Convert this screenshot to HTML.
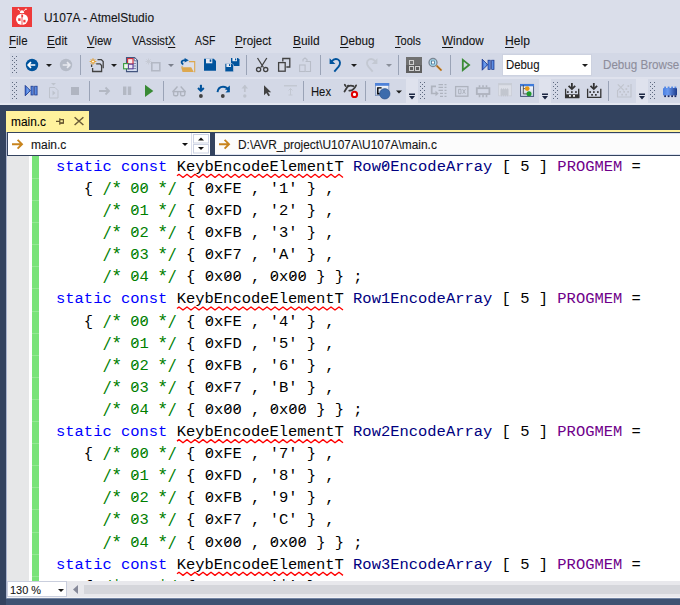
<!DOCTYPE html>
<html><head><meta charset="utf-8"><style>
html,body{margin:0;padding:0;width:680px;height:605px;overflow:hidden;background:#DADEEA;}
.z{position:relative}.ast{display:inline-block;transform:translateY(0.6px) scale(1.18)}.sl{display:inline-block;transform:translateY(1.1px) scaleY(1.2)}.z::after{content:'';position:absolute;left:1.35px;top:7.3px;width:6.2px;height:1.05px;background:currentColor;transform:rotate(-39deg)}
</style></head><body>
<div style="position:absolute;left:0px;top:0px;width:680px;height:105px;background:#DADEEA;"></div>
<div style="position:absolute;left:10px;top:53px;width:670px;height:24px;background:#D3D8E6;"></div>
<div style="position:absolute;left:10px;top:79px;width:396px;height:24px;background:#D3D8E6;"></div>
<div style="position:absolute;left:406px;top:79px;width:12px;height:24px;background:#DFE2ED;"></div>
<div style="position:absolute;left:418px;top:79px;width:121px;height:24px;background:#D3D8E6;"></div>
<div style="position:absolute;left:539px;top:79px;width:12px;height:24px;background:#DFE2ED;"></div>
<div style="position:absolute;left:551px;top:79px;width:85px;height:24px;background:#D3D8E6;"></div>
<div style="position:absolute;left:636px;top:79px;width:12px;height:24px;background:#DFE2ED;"></div>
<div style="position:absolute;left:648px;top:79px;width:32px;height:24px;background:#D3D8E6;"></div>
<div style="position:absolute;left:10px;top:77px;width:670px;height:2px;background:#DFE2ED;"></div>
<div style="position:absolute;left:0px;top:103px;width:680px;height:2px;background:#E4E7F0;"></div>
<div style="position:absolute;left:0px;top:105px;width:680px;height:500px;background:#33435F;"></div>
<div style="position:absolute;left:6px;top:111px;width:83px;height:21px;background:#FFF29D;"></div>
<div style="position:absolute;left:6px;top:130px;width:674px;height:2px;background:#FFF29D;"></div>
<div style="position:absolute;left:6px;top:132px;width:674px;height:24px;background:#A9B3CC;"></div>
<div style="position:absolute;left:7px;top:132px;width:673px;height:24px;background:#33435F;"></div>
<div style="position:absolute;left:8px;top:133px;width:183px;height:22px;background:#FFFFFF;"></div>
<div style="position:absolute;left:191px;top:133px;width:1px;height:22px;background:#D9DDEA;"></div>
<div style="position:absolute;left:192px;top:133px;width:18px;height:22px;background:#FFFFFF;"></div>
<div style="position:absolute;left:210px;top:133px;width:5px;height:22px;background:#33435F;"></div>
<div style="position:absolute;left:215px;top:133px;width:465px;height:22px;background:#FCFCFC;"></div>
<div style="position:absolute;left:215px;top:133px;width:465px;height:1px;background:#DDE2F0;"></div>
<div style="position:absolute;left:215px;top:154px;width:465px;height:1px;background:#DDE2F0;"></div>
<div style="position:absolute;left:6px;top:156px;width:1px;height:442px;background:#A9B3CC;"></div>
<div style="position:absolute;left:7px;top:156px;width:673px;height:425px;background:#FFFFFF;"></div>
<div style="position:absolute;left:7px;top:156px;width:22px;height:425px;background:#E6E7E8;"></div>
<div style="position:absolute;left:32px;top:156px;width:7px;height:425px;background:#79E379;"></div>
<div style="position:absolute;left:32px;top:178px;width:7px;height:1px;background:#94E894;"></div>
<div style="position:absolute;left:32px;top:200px;width:7px;height:1px;background:#94E894;"></div>
<div style="position:absolute;left:32px;top:222px;width:7px;height:1px;background:#94E894;"></div>
<div style="position:absolute;left:32px;top:244px;width:7px;height:1px;background:#94E894;"></div>
<div style="position:absolute;left:32px;top:266px;width:7px;height:1px;background:#94E894;"></div>
<div style="position:absolute;left:32px;top:288px;width:7px;height:1px;background:#94E894;"></div>
<div style="position:absolute;left:32px;top:311px;width:7px;height:1px;background:#94E894;"></div>
<div style="position:absolute;left:32px;top:333px;width:7px;height:1px;background:#94E894;"></div>
<div style="position:absolute;left:32px;top:355px;width:7px;height:1px;background:#94E894;"></div>
<div style="position:absolute;left:32px;top:377px;width:7px;height:1px;background:#94E894;"></div>
<div style="position:absolute;left:32px;top:399px;width:7px;height:1px;background:#94E894;"></div>
<div style="position:absolute;left:32px;top:421px;width:7px;height:1px;background:#94E894;"></div>
<div style="position:absolute;left:32px;top:443px;width:7px;height:1px;background:#94E894;"></div>
<div style="position:absolute;left:32px;top:465px;width:7px;height:1px;background:#94E894;"></div>
<div style="position:absolute;left:32px;top:487px;width:7px;height:1px;background:#94E894;"></div>
<div style="position:absolute;left:32px;top:509px;width:7px;height:1px;background:#94E894;"></div>
<div style="position:absolute;left:32px;top:532px;width:7px;height:1px;background:#94E894;"></div>
<div style="position:absolute;left:32px;top:554px;width:7px;height:1px;background:#94E894;"></div>
<div style="position:absolute;left:32px;top:576px;width:7px;height:1px;background:#94E894;"></div>
<div style="position:absolute;left:7px;top:581px;width:673px;height:17px;background:#E8E8EC;"></div>
<div style="position:absolute;left:7px;top:581px;width:60px;height:16px;background:#FFFFFF;box-sizing:border-box;border:1px solid #C9CEDD;"></div>
<div style="position:absolute;left:84px;top:585px;width:596px;height:9px;background:#D5D6DB;"></div>
<div style="position:absolute;left:7px;top:597px;width:673px;height:1px;background:#F2F2F5;"></div>
<div style="position:absolute;left:6px;top:598px;width:674px;height:1px;background:#7384A3;"></div>
<div style="position:absolute;left:6px;top:599px;width:674px;height:6px;background:#3E5272;"></div>
<div style="position:absolute;left:44px;top:10.69px;font-family:'Liberation Sans', sans-serif;font-size:12.5px;line-height:normal;white-space:pre;color:#141414;-webkit-text-stroke:0.1px #141414;transform:scaleX(0.954);transform-origin:0 0;">U107A - AtmelStudio</div>
<div style="position:absolute;left:9.3px;top:33.69px;font-family:'Liberation Sans', sans-serif;font-size:12.5px;line-height:normal;white-space:pre;color:#141414;-webkit-text-stroke:0.1px #141414;transform:scaleX(0.921);transform-origin:0 0;"><u style="text-decoration-thickness:1px;text-underline-offset:1.5px">F</u>ile</div>
<div style="position:absolute;left:47.2px;top:33.69px;font-family:'Liberation Sans', sans-serif;font-size:12.5px;line-height:normal;white-space:pre;color:#141414;-webkit-text-stroke:0.1px #141414;transform:scaleX(0.943);transform-origin:0 0;"><u style="text-decoration-thickness:1px;text-underline-offset:1.5px">E</u>dit</div>
<div style="position:absolute;left:87px;top:33.69px;font-family:'Liberation Sans', sans-serif;font-size:12.5px;line-height:normal;white-space:pre;color:#141414;-webkit-text-stroke:0.1px #141414;transform:scaleX(0.915);transform-origin:0 0;"><u style="text-decoration-thickness:1px;text-underline-offset:1.5px">V</u>iew</div>
<div style="position:absolute;left:132px;top:33.69px;font-family:'Liberation Sans', sans-serif;font-size:12.5px;line-height:normal;white-space:pre;color:#141414;-webkit-text-stroke:0.1px #141414;transform:scaleX(0.882);transform-origin:0 0;">VAssist<u style="text-decoration-thickness:1px;text-underline-offset:1.5px">X</u></div>
<div style="position:absolute;left:195px;top:33.69px;font-family:'Liberation Sans', sans-serif;font-size:12.5px;line-height:normal;white-space:pre;color:#141414;-webkit-text-stroke:0.1px #141414;transform:scaleX(0.833);transform-origin:0 0;">ASF</div>
<div style="position:absolute;left:235.3px;top:33.69px;font-family:'Liberation Sans', sans-serif;font-size:12.5px;line-height:normal;white-space:pre;color:#141414;-webkit-text-stroke:0.1px #141414;transform:scaleX(0.933);transform-origin:0 0;"><u style="text-decoration-thickness:1px;text-underline-offset:1.5px">P</u>roject</div>
<div style="position:absolute;left:292.5px;top:33.69px;font-family:'Liberation Sans', sans-serif;font-size:12.5px;line-height:normal;white-space:pre;color:#141414;-webkit-text-stroke:0.1px #141414;transform:scaleX(0.956);transform-origin:0 0;"><u style="text-decoration-thickness:1px;text-underline-offset:1.5px">B</u>uild</div>
<div style="position:absolute;left:339.6px;top:33.69px;font-family:'Liberation Sans', sans-serif;font-size:12.5px;line-height:normal;white-space:pre;color:#141414;-webkit-text-stroke:0.1px #141414;transform:scaleX(0.936);transform-origin:0 0;"><u style="text-decoration-thickness:1px;text-underline-offset:1.5px">D</u>ebug</div>
<div style="position:absolute;left:394.5px;top:33.69px;font-family:'Liberation Sans', sans-serif;font-size:12.5px;line-height:normal;white-space:pre;color:#141414;-webkit-text-stroke:0.1px #141414;transform:scaleX(0.883);transform-origin:0 0;"><u style="text-decoration-thickness:1px;text-underline-offset:1.5px">T</u>ools</div>
<div style="position:absolute;left:441.5px;top:33.69px;font-family:'Liberation Sans', sans-serif;font-size:12.5px;line-height:normal;white-space:pre;color:#141414;-webkit-text-stroke:0.1px #141414;transform:scaleX(0.937);transform-origin:0 0;"><u style="text-decoration-thickness:1px;text-underline-offset:1.5px">W</u>indow</div>
<div style="position:absolute;left:505.4px;top:33.69px;font-family:'Liberation Sans', sans-serif;font-size:12.5px;line-height:normal;white-space:pre;color:#141414;-webkit-text-stroke:0.1px #141414;transform:scaleX(0.968);transform-origin:0 0;"><u style="text-decoration-thickness:1px;text-underline-offset:1.5px">H</u>elp</div>
<div style="position:absolute;left:502px;top:54px;width:90px;height:22px;background:#CDD2E0;"></div>
<div style="position:absolute;left:503px;top:55px;width:88px;height:20px;background:#FFFFFF;"></div>
<div style="position:absolute;left:506px;top:57.69px;font-family:'Liberation Sans', sans-serif;font-size:12.5px;line-height:normal;white-space:pre;color:#141414;-webkit-text-stroke:0.1px #141414;transform:scaleX(0.91);transform-origin:0 0;">Debug</div>
<div style="position:absolute;left:603px;top:57.69px;font-family:'Liberation Sans', sans-serif;font-size:12.5px;line-height:normal;white-space:pre;color:#8D8D9B;-webkit-text-stroke:0.1px #8D8D9B;transform:scaleX(0.93);transform-origin:0 0;">Debug Browse</div>
<div style="position:absolute;left:311px;top:84.69px;font-family:'Liberation Sans', sans-serif;font-size:12.5px;line-height:normal;white-space:pre;color:#141414;-webkit-text-stroke:0.1px #141414;transform:scaleX(0.9);transform-origin:0 0;">Hex</div>
<div style="position:absolute;left:10.5px;top:114.69px;font-family:'Liberation Sans', sans-serif;font-size:12.5px;line-height:normal;white-space:pre;color:#000000;-webkit-text-stroke:0.1px #000000;transform:scaleX(0.95);transform-origin:0 0;">main.c</div>
<div style="position:absolute;left:31px;top:137.69px;font-family:'Liberation Sans', sans-serif;font-size:12.5px;line-height:normal;white-space:pre;color:#141414;-webkit-text-stroke:0.1px #141414;transform:scaleX(0.96);transform-origin:0 0;">main.c</div>
<div style="position:absolute;left:238px;top:137.69px;font-family:'Liberation Sans', sans-serif;font-size:12.5px;line-height:normal;white-space:pre;color:#141414;-webkit-text-stroke:0.1px #141414;transform:scaleX(0.952);transform-origin:0 0;">D:\AVR_project\U107A\U107A\main.c</div>
<div style="position:absolute;left:10px;top:583.59px;font-family:'Liberation Sans', sans-serif;font-size:11.5px;line-height:normal;white-space:pre;color:#141414;-webkit-text-stroke:0.1px #141414;transform:scaleX(0.95);transform-origin:0 0;">130 %</div>
<div style="position:absolute;left:7px;top:156px;width:673px;height:425px;overflow:hidden">
<div style="position:absolute;left:49px;top:-0.27px;height:22.11px;line-height:22.11px;font-family:'Liberation Mono', monospace;font-size:15.48px;white-space:pre"><span style="color:#0000FF">static const </span><span style="color:#000000">KeybEncodeElementT</span><span style="color:#000"> </span><span style="color:#000080">Row<span class="z">0</span>EncodeArray</span><span style="color:#000000"> [ 5 ] </span><span style="color:#6F008A">PROGMEM</span><span style="color:#000000"> =</span></div>
<div style="position:absolute;left:49px;top:21.84px;height:22.11px;line-height:22.11px;font-family:'Liberation Mono', monospace;font-size:15.48px;white-space:pre"><span style="color:#000000">   { </span><span style="color:#008000"><span class="sl">/</span><span class="ast">*</span> <span class="z">0</span><span class="z">0</span> <span class="ast">*</span><span class="sl">/</span></span><span style="color:#000000"> { <span class="z">0</span>xFE , '1' } ,</span></div>
<div style="position:absolute;left:49px;top:43.95px;height:22.11px;line-height:22.11px;font-family:'Liberation Mono', monospace;font-size:15.48px;white-space:pre"><span style="color:#000000">     </span><span style="color:#008000"><span class="sl">/</span><span class="ast">*</span> <span class="z">0</span>1 <span class="ast">*</span><span class="sl">/</span></span><span style="color:#000000"> { <span class="z">0</span>xFD , '2' } ,</span></div>
<div style="position:absolute;left:49px;top:66.06px;height:22.11px;line-height:22.11px;font-family:'Liberation Mono', monospace;font-size:15.48px;white-space:pre"><span style="color:#000000">     </span><span style="color:#008000"><span class="sl">/</span><span class="ast">*</span> <span class="z">0</span>2 <span class="ast">*</span><span class="sl">/</span></span><span style="color:#000000"> { <span class="z">0</span>xFB , '3' } ,</span></div>
<div style="position:absolute;left:49px;top:88.17px;height:22.11px;line-height:22.11px;font-family:'Liberation Mono', monospace;font-size:15.48px;white-space:pre"><span style="color:#000000">     </span><span style="color:#008000"><span class="sl">/</span><span class="ast">*</span> <span class="z">0</span>3 <span class="ast">*</span><span class="sl">/</span></span><span style="color:#000000"> { <span class="z">0</span>xF7 , 'A' } ,</span></div>
<div style="position:absolute;left:49px;top:110.28px;height:22.11px;line-height:22.11px;font-family:'Liberation Mono', monospace;font-size:15.48px;white-space:pre"><span style="color:#000">     </span><span style="color:#008000"><span class="sl">/</span><span class="ast">*</span> <span class="z">0</span>4 <span class="ast">*</span><span class="sl">/</span></span><span style="color:#000000"> { <span class="z">0</span>x<span class="z">0</span><span class="z">0</span> , <span class="z">0</span>x<span class="z">0</span><span class="z">0</span> } } ;</span></div>
<div style="position:absolute;left:49px;top:132.39px;height:22.11px;line-height:22.11px;font-family:'Liberation Mono', monospace;font-size:15.48px;white-space:pre"><span style="color:#0000FF">static const </span><span style="color:#000000">KeybEncodeElementT</span><span style="color:#000"> </span><span style="color:#000080">Row1EncodeArray</span><span style="color:#000000"> [ 5 ] </span><span style="color:#6F008A">PROGMEM</span><span style="color:#000000"> =</span></div>
<div style="position:absolute;left:49px;top:154.50px;height:22.11px;line-height:22.11px;font-family:'Liberation Mono', monospace;font-size:15.48px;white-space:pre"><span style="color:#000000">   { </span><span style="color:#008000"><span class="sl">/</span><span class="ast">*</span> <span class="z">0</span><span class="z">0</span> <span class="ast">*</span><span class="sl">/</span></span><span style="color:#000000"> { <span class="z">0</span>xFE , '4' } ,</span></div>
<div style="position:absolute;left:49px;top:176.61px;height:22.11px;line-height:22.11px;font-family:'Liberation Mono', monospace;font-size:15.48px;white-space:pre"><span style="color:#000000">     </span><span style="color:#008000"><span class="sl">/</span><span class="ast">*</span> <span class="z">0</span>1 <span class="ast">*</span><span class="sl">/</span></span><span style="color:#000000"> { <span class="z">0</span>xFD , '5' } ,</span></div>
<div style="position:absolute;left:49px;top:198.72px;height:22.11px;line-height:22.11px;font-family:'Liberation Mono', monospace;font-size:15.48px;white-space:pre"><span style="color:#000000">     </span><span style="color:#008000"><span class="sl">/</span><span class="ast">*</span> <span class="z">0</span>2 <span class="ast">*</span><span class="sl">/</span></span><span style="color:#000000"> { <span class="z">0</span>xFB , '6' } ,</span></div>
<div style="position:absolute;left:49px;top:220.83px;height:22.11px;line-height:22.11px;font-family:'Liberation Mono', monospace;font-size:15.48px;white-space:pre"><span style="color:#000000">     </span><span style="color:#008000"><span class="sl">/</span><span class="ast">*</span> <span class="z">0</span>3 <span class="ast">*</span><span class="sl">/</span></span><span style="color:#000000"> { <span class="z">0</span>xF7 , 'B' } ,</span></div>
<div style="position:absolute;left:49px;top:242.94px;height:22.11px;line-height:22.11px;font-family:'Liberation Mono', monospace;font-size:15.48px;white-space:pre"><span style="color:#000">     </span><span style="color:#008000"><span class="sl">/</span><span class="ast">*</span> <span class="z">0</span>4 <span class="ast">*</span><span class="sl">/</span></span><span style="color:#000000"> { <span class="z">0</span>x<span class="z">0</span><span class="z">0</span> , <span class="z">0</span>x<span class="z">0</span><span class="z">0</span> } } ;</span></div>
<div style="position:absolute;left:49px;top:265.05px;height:22.11px;line-height:22.11px;font-family:'Liberation Mono', monospace;font-size:15.48px;white-space:pre"><span style="color:#0000FF">static const </span><span style="color:#000000">KeybEncodeElementT</span><span style="color:#000"> </span><span style="color:#000080">Row2EncodeArray</span><span style="color:#000000"> [ 5 ] </span><span style="color:#6F008A">PROGMEM</span><span style="color:#000000"> =</span></div>
<div style="position:absolute;left:49px;top:287.16px;height:22.11px;line-height:22.11px;font-family:'Liberation Mono', monospace;font-size:15.48px;white-space:pre"><span style="color:#000000">   { </span><span style="color:#008000"><span class="sl">/</span><span class="ast">*</span> <span class="z">0</span><span class="z">0</span> <span class="ast">*</span><span class="sl">/</span></span><span style="color:#000000"> { <span class="z">0</span>xFE , '7' } ,</span></div>
<div style="position:absolute;left:49px;top:309.27px;height:22.11px;line-height:22.11px;font-family:'Liberation Mono', monospace;font-size:15.48px;white-space:pre"><span style="color:#000000">     </span><span style="color:#008000"><span class="sl">/</span><span class="ast">*</span> <span class="z">0</span>1 <span class="ast">*</span><span class="sl">/</span></span><span style="color:#000000"> { <span class="z">0</span>xFD , '8' } ,</span></div>
<div style="position:absolute;left:49px;top:331.38px;height:22.11px;line-height:22.11px;font-family:'Liberation Mono', monospace;font-size:15.48px;white-space:pre"><span style="color:#000000">     </span><span style="color:#008000"><span class="sl">/</span><span class="ast">*</span> <span class="z">0</span>2 <span class="ast">*</span><span class="sl">/</span></span><span style="color:#000000"> { <span class="z">0</span>xFB , '9' } ,</span></div>
<div style="position:absolute;left:49px;top:353.49px;height:22.11px;line-height:22.11px;font-family:'Liberation Mono', monospace;font-size:15.48px;white-space:pre"><span style="color:#000000">     </span><span style="color:#008000"><span class="sl">/</span><span class="ast">*</span> <span class="z">0</span>3 <span class="ast">*</span><span class="sl">/</span></span><span style="color:#000000"> { <span class="z">0</span>xF7 , 'C' } ,</span></div>
<div style="position:absolute;left:49px;top:375.60px;height:22.11px;line-height:22.11px;font-family:'Liberation Mono', monospace;font-size:15.48px;white-space:pre"><span style="color:#000">     </span><span style="color:#008000"><span class="sl">/</span><span class="ast">*</span> <span class="z">0</span>4 <span class="ast">*</span><span class="sl">/</span></span><span style="color:#000000"> { <span class="z">0</span>x<span class="z">0</span><span class="z">0</span> , <span class="z">0</span>x<span class="z">0</span><span class="z">0</span> } } ;</span></div>
<div style="position:absolute;left:49px;top:397.71px;height:22.11px;line-height:22.11px;font-family:'Liberation Mono', monospace;font-size:15.48px;white-space:pre"><span style="color:#0000FF">static const </span><span style="color:#000000">KeybEncodeElementT</span><span style="color:#000"> </span><span style="color:#000080">Row3EncodeArray</span><span style="color:#000000"> [ 5 ] </span><span style="color:#6F008A">PROGMEM</span><span style="color:#000000"> =</span></div>
<div style="position:absolute;left:49px;top:419.82px;height:22.11px;line-height:22.11px;font-family:'Liberation Mono', monospace;font-size:15.48px;white-space:pre"><span style="color:#000000">   { </span><span style="color:#008000"><span class="sl">/</span><span class="ast">*</span> <span class="z">0</span><span class="z">0</span> <span class="ast">*</span><span class="sl">/</span></span><span style="color:#000000"> { <span class="z">0</span>xFE , '<span class="ast">*</span>' } ,</span></div>
</div>
<svg style="position:absolute;left:0;top:0" width="680" height="605" viewBox="0 0 680 605">
<rect x="12" y="7" width="20" height="20" fill="#EE3A3A"/><ellipse cx="22" cy="19.3" rx="6" ry="5.6" fill="#fff"/><path d="M19.8 13c0.3-2 1.2-2.8 2.2-2.8s1.9 0.8 2.2 2.8z" fill="#fff"/><path d="M20.5 11l-2-1.6M23.5 11l2.2-1.6" stroke="#fff" stroke-width="0.8"/><circle cx="18.4" cy="9.3" r="0.8" fill="#fff"/><circle cx="26" cy="9.3" r="0.8" fill="#fff"/><path d="M22 14v11" stroke="#EE3A3A" stroke-width="0.9"/><rect x="21.5" y="15" width="1.6" height="2.2" fill="#EE3A3A"/><rect x="18.2" y="18.3" width="2.4" height="2.6" fill="#EE3A3A"/><rect x="23.3" y="19.8" width="2.2" height="2.6" fill="#EE3A3A"/><rect x="12" y="56" width="1" height="1" fill="#5E6A80"/><rect x="16" y="56" width="1" height="1" fill="#5E6A80"/><rect x="14" y="58" width="1" height="1" fill="#5E6A80"/><rect x="12" y="60" width="1" height="1" fill="#5E6A80"/><rect x="16" y="60" width="1" height="1" fill="#5E6A80"/><rect x="14" y="62" width="1" height="1" fill="#5E6A80"/><rect x="12" y="64" width="1" height="1" fill="#5E6A80"/><rect x="16" y="64" width="1" height="1" fill="#5E6A80"/><rect x="14" y="66" width="1" height="1" fill="#5E6A80"/><rect x="12" y="68" width="1" height="1" fill="#5E6A80"/><rect x="16" y="68" width="1" height="1" fill="#5E6A80"/><rect x="14" y="70" width="1" height="1" fill="#5E6A80"/><rect x="12" y="72" width="1" height="1" fill="#5E6A80"/><rect x="16" y="72" width="1" height="1" fill="#5E6A80"/><circle cx="32" cy="65" r="6.2" fill="#00539C"/><path d="M28.3 65h7M31 62.2l-2.8 2.8 2.8 2.8" stroke="#fff" stroke-width="1.7" fill="none"/><path d="M46 64h6l-3 3z" fill="#1E1E1E"/><circle cx="66" cy="65" r="6.2" fill="#B5BBC7"/><path d="M62.7 65h7M67 62.2l2.8 2.8-2.8 2.8" stroke="#E8EAF0" stroke-width="1.7" fill="none"/><rect x="80" y="55" width="1" height="20" fill="#9AA3B6"/><g stroke="#E39A24" stroke-width="0.9" fill="none"><path d="M93 58.2v6.6M89.7 61.5h6.6M90.7 59.2l4.6 4.6M95.3 59.2l-4.6 4.6"/></g><circle cx="93" cy="61.5" r="1.5" fill="#FFF6E0" stroke="#E39A24" stroke-width="0.9"/><path d="M97.5 59.6h3.8l1.9 1.9v6.8" stroke="#424242" stroke-width="1.3" fill="none"/><path d="M91.6 64.6v2.4M92.6 68v3.5h9v-6l-1.6-1.6h-3.8" stroke="#424242" stroke-width="1.3" fill="none"/><path d="M111 64h6l-3 3z" fill="#1E1E1E"/><path d="M126.5 57.6h8l2.9 2.9v11.1h-10.9z" fill="#D4DDF0" stroke="#43557E" stroke-width="1.1"/><path d="M134.2 57.8v3h3" stroke="#43557E" stroke-width="0.8" fill="#fff"/><path d="M132.5 63.5h3.5M132.5 66h3.5M132.5 68.5h3.5" stroke="#6A7A9A" stroke-width="0.8"/><rect x="127.6" y="58.6" width="5.4" height="5.4" fill="#FBEAEC" stroke="#D42A36" stroke-width="1.1"/><rect x="123.6" y="63.6" width="5.2" height="5.2" fill="#EEF8EA" stroke="#3A9A3E" stroke-width="1.1"/><rect x="128.4" y="64.2" width="4.6" height="4.6" fill="#EDE6F5" stroke="#5B3F95" stroke-width="1.1"/><g stroke="#C5CAD4" stroke-width="0.9"><path d="M148.5 58.5v6M145.5 61.5h6M146.4 59.4l4.2 4.2M150.6 59.4l-4.2 4.2"/></g><path d="M151.8 62.8h8v8h-8z" fill="none" stroke="#B3B8C4" stroke-width="1.6"/><path d="M168 64h6l-3 3z" fill="#7A7F8B"/><path d="M183.5 62.3h11.2v9.8h-11.2z" fill="#DCDFEB"/><path d="M189 61.6h5.7v10.6" stroke="#DDA84F" stroke-width="1.1" fill="none"/><path d="M181.2 67.2h10l2.6 4.9h-11.3z" fill="#DDA84F"/><rect x="181.6" y="66" width="1" height="1.5" fill="#DDA84F"/><path d="M183.3 64.3c-1.6-0.6-2-2-1.4-3 0.6-1 1.8-1.3 3.6-1.2" stroke="#00539C" stroke-width="1.8" fill="none"/><path d="M184.6 58l4.2 2.3-4.2 2.3z" fill="#00539C"/><path d="M204 58.7h9.8l2.2 2.2v9.9h-12z" fill="#00539C"/><rect x="206" y="58.7" width="6.3" height="4.6" fill="#E6E9F2"/><rect x="209.7" y="59.4" width="1.6" height="2.4" fill="#00539C"/><path d="M231 58h7l1.5 1.5v6.5h-8.5z" fill="#00539C"/><rect x="232.4" y="58" width="4.6" height="3.2" fill="#E6E9F2"/><rect x="235" y="58.5" width="1.2" height="1.8" fill="#00539C"/><path d="M225 63.5h7l1.5 1.5v6.8h-8.5z" fill="#00539C" stroke="#D3D8E6" stroke-width="0.6"/><rect x="226.4" y="63.8" width="4.6" height="3.2" fill="#E6E9F2"/><rect x="229" y="64.2" width="1.2" height="1.8" fill="#00539C"/><rect x="246" y="55" width="1" height="20" fill="#9AA3B6"/><g stroke="#424242" stroke-width="1.3" fill="none"><path d="M257.5 58l6 9.5M266.8 58l-6 9.5"/><circle cx="258.6" cy="69.6" r="2.1"/><circle cx="265.7" cy="69.6" r="2.1"/></g><path d="M282.8 61.5v-3h7v8.5h-3.5" stroke="#424242" stroke-width="1.3" fill="none"/><rect x="278.6" y="62.6" width="6.6" height="8.6" fill="#D6D9E4" stroke="#424242" stroke-width="1.3"/><g stroke="#B8BDC8" stroke-width="1.1" fill="none"><path d="M303 61.5v-2l2-1.5 2 1.5v2M305.5 61.5h5v10h-5"/><rect x="299.6" y="65" width="5.5" height="6.5"/></g><rect x="320" y="55" width="1" height="20" fill="#9AA3B6"/><path d="M331.5 61.5c2-2.5 4.5-3 6.5-2 2.5 1.3 2.6 4.6 0.6 7.2l-4.3 5" stroke="#00539C" stroke-width="1.9" fill="none"/><path d="M329.6 58.2v5.8h5.8z" fill="#00539C"/><path d="M351 64h6l-3 3z" fill="#1E1E1E"/><path d="M375.5 61.5c-2-2.5-4.5-3-6.5-2-2.5 1.3-2.6 4.6-0.6 7.2l4.3 5" stroke="#C3C8D2" stroke-width="1.9" fill="none"/><path d="M377.4 58.2v5.8h-5.8z" fill="#C3C8D2"/><path d="M386 64h6l-3 3z" fill="#8A8F9A"/><rect x="398" y="55" width="1" height="20" fill="#9AA3B6"/><rect x="406" y="57" width="16" height="16" fill="#5F5F5F"/><rect x="406" y="57" width="16" height="8" fill="#707070"/><g fill="none" stroke="#CFCFCF" stroke-width="1"><rect x="409.5" y="60.5" width="4" height="4"/><rect x="409.5" y="66.5" width="4" height="4"/><rect x="415.5" y="66.5" width="4" height="4"/></g><path d="M436.5 65.5l5 5" stroke="#D98B2A" stroke-width="2.2"/><path d="M436.5 65.5l5 5" stroke="#3A3A3A" stroke-width="0.5"/><circle cx="433" cy="62.5" r="4" fill="#A8E0F5" stroke="#7D8794" stroke-width="1.3"/><rect x="431.5" y="61" width="3" height="3" fill="#fff" stroke="#3A6080" stroke-width="0.7"/><rect x="450" y="55" width="1" height="20" fill="#9AA3B6"/><path d="M462.8 59.8v10.2l6.3-5.1z" fill="none" stroke="#3A8C36" stroke-width="1.8" stroke-linejoin="miter"/><path d="M482.2 59.2v11l5.5-5.5z" fill="url(#bg1)" stroke="#17348A" stroke-width="0.8"/><rect x="488" y="60.2" width="2.2" height="9.2" fill="url(#bg1)" stroke="#17348A" stroke-width="0.7"/><rect x="491.7" y="60.2" width="2.3" height="9.2" fill="url(#bg1)" stroke="#17348A" stroke-width="0.7"/><path d="M582 64h6l-3 3z" fill="#1E1E1E"/><rect x="12" y="82" width="1" height="1" fill="#5E6A80"/><rect x="16" y="82" width="1" height="1" fill="#5E6A80"/><rect x="14" y="84" width="1" height="1" fill="#5E6A80"/><rect x="12" y="86" width="1" height="1" fill="#5E6A80"/><rect x="16" y="86" width="1" height="1" fill="#5E6A80"/><rect x="14" y="88" width="1" height="1" fill="#5E6A80"/><rect x="12" y="90" width="1" height="1" fill="#5E6A80"/><rect x="16" y="90" width="1" height="1" fill="#5E6A80"/><rect x="14" y="92" width="1" height="1" fill="#5E6A80"/><rect x="12" y="94" width="1" height="1" fill="#5E6A80"/><rect x="16" y="94" width="1" height="1" fill="#5E6A80"/><rect x="14" y="96" width="1" height="1" fill="#5E6A80"/><rect x="12" y="98" width="1" height="1" fill="#5E6A80"/><rect x="16" y="98" width="1" height="1" fill="#5E6A80"/><defs><linearGradient id="bg1" x1="0" y1="0" x2="1" y2="0"><stop offset="0" stop-color="#2A5BC8"/><stop offset="0.5" stop-color="#7AAAF2"/><stop offset="1" stop-color="#2A5BC8"/></linearGradient></defs><path d="M25.2 85.4v10.4l5.2-5.2z" fill="url(#bg1)" stroke="#17348A" stroke-width="0.8"/><rect x="31" y="86.2" width="2.2" height="8.8" fill="url(#bg1)" stroke="#17348A" stroke-width="0.7"/><rect x="34.7" y="86.2" width="2.4" height="8.8" fill="url(#bg1)" stroke="#17348A" stroke-width="0.7"/><path d="M51 83h5l-2.5 2.5z" fill="#BEC3CD"/><path d="M49.5 87.5h5.5l3 3v7.5h-8.5z" fill="none" stroke="#BEC3CD" stroke-width="1"/><path d="M52.5 90.5v5l3-2.5z" fill="#BEC3CD"/><rect x="71" y="87" width="8" height="8" fill="#B0B5C1"/><rect x="89" y="81" width="1" height="20" fill="#9AA3B6"/><path d="M99 91h10M105.5 87.5l3.5 3.5-3.5 3.5" stroke="#B3B8C3" stroke-width="1.8" fill="none"/><rect x="123" y="86.5" width="3.4" height="8.5" fill="#B3B8C3"/><rect x="127.8" y="86.5" width="3.4" height="8.5" fill="#B3B8C3"/><path d="M145 84.8v12.2l8.3-6.1z" fill="#388A34"/><rect x="163" y="81" width="1" height="20" fill="#9AA3B6"/><g stroke="#AEB3BE" stroke-width="1.4" fill="none" stroke-linejoin="round"><path d="M172.3 91.6h13.6"/><path d="M173 91.5l4.5-5M185.2 91.5l-4.5-5"/><path d="M173.6 91.6v2.6q0 1.6 1.6 1.6h1.3q1.3 0 1.3-1.6v-2.6"/><path d="M180.6 91.6v2.6q0 1.6 1.3 1.6h1.3q1.6 0 1.6-1.6v-2.6"/></g><path d="M200.9 84.8v6" stroke="#00539C" stroke-width="2.1"/><path d="M198 88l2.9 2.9 2.9-2.9" stroke="#00539C" stroke-width="2" fill="none"/><circle cx="200.9" cy="96" r="1.9" fill="#424242"/><path d="M217.5 92.2c0.5-3.5 3-5.4 5.5-5.4s4.4 1.3 5.2 3.3" stroke="#00539C" stroke-width="1.9" fill="none"/><path d="M224.8 89.8h5v-4.2z" fill="#00539C"/><path d="M225.5 92.5l4.4-0.2-0.2-4.6z" fill="#00539C"/><circle cx="222.8" cy="96" r="1.9" fill="#424242"/><path d="M244.8 85.5v6.5" stroke="#BEC3CD" stroke-width="1.7"/><path d="M241.5 88.5h6.6l-3.3-3.8z" fill="#BEC3CD"/><circle cx="244.8" cy="96" r="1.7" fill="#BEC3CD"/><path d="M264 85.3v10l2.3-2.2 2.2 3.2 1.5-1-2.1-3h3.3z" fill="#424242"/><rect x="284" y="85" width="13" height="1.5" fill="#C3C8D2"/><path d="M290.5 88.5v6.5M288.5 90.5l2-2 2 2M288.5 95h4" stroke="#C3C8D2" stroke-width="1" fill="none"/><rect x="303" y="81" width="1" height="20" fill="#9AA3B6"/><g stroke="#3C3C3C" stroke-width="1.8" fill="none" stroke-linecap="round"><path d="M344.5 91.5L348.2 85.6"/><path d="M344.8 84.8l0.8 1.2"/><path d="M348 86.4c1.8-0.9 3.6-0.9 5.4-0.2"/><path d="M349.3 90.6c2.6 0.3 4.6-0.6 6.8-5.2"/></g><circle cx="354.5" cy="94.4" r="2.6" fill="#fff" stroke="#E00000" stroke-width="2"/><rect x="365" y="81" width="1" height="20" fill="#9AA3B6"/><defs><linearGradient id="wb" x1="0" y1="0" x2="0" y2="1"><stop offset="0" stop-color="#FFFFFF"/><stop offset="1" stop-color="#B9C6DE"/></linearGradient></defs><rect x="375.4" y="83.4" width="13.4" height="12.2" fill="url(#wb)" stroke="#7E93BC" stroke-width="0.8"/><rect x="375" y="83" width="14.2" height="2.8" fill="#4F82D8"/><path d="M381.6 87.9h-3.8v5.8h2" stroke="#000" stroke-width="1.4" fill="none"/><circle cx="384.8" cy="93.8" r="5.2" fill="#3D6CAC" stroke="#2A4F86" stroke-width="0.6"/><path d="M396 90.5h6l-3 3z" fill="#1E1E1E"/><rect x="409" y="93.5" width="6" height="1.5" fill="#1B2540"/><path d="M409 96h6l-3 3.5z" fill="#1B2540"/><rect x="420" y="82" width="1" height="1" fill="#5E6A80"/><rect x="424" y="82" width="1" height="1" fill="#5E6A80"/><rect x="422" y="84" width="1" height="1" fill="#5E6A80"/><rect x="420" y="86" width="1" height="1" fill="#5E6A80"/><rect x="424" y="86" width="1" height="1" fill="#5E6A80"/><rect x="422" y="88" width="1" height="1" fill="#5E6A80"/><rect x="420" y="90" width="1" height="1" fill="#5E6A80"/><rect x="424" y="90" width="1" height="1" fill="#5E6A80"/><rect x="422" y="92" width="1" height="1" fill="#5E6A80"/><rect x="420" y="94" width="1" height="1" fill="#5E6A80"/><rect x="424" y="94" width="1" height="1" fill="#5E6A80"/><rect x="422" y="96" width="1" height="1" fill="#5E6A80"/><rect x="420" y="98" width="1" height="1" fill="#5E6A80"/><rect x="424" y="98" width="1" height="1" fill="#5E6A80"/><g stroke="#AEB3BE" stroke-width="1.7" fill="none"><path d="M436 86.3h-4.3v7.2h4.8"/></g><path d="M435.5 90.8l3.2 2.7-3.2 2.7z" fill="#AEB3BE"/><g stroke="#AEB3BE" stroke-width="1.3"><path d="M438.5 84.6h4.5M444.5 84.6h2M438.5 87.4h4.5M444.5 87.4h2M438.5 90.3h4.5M444.5 90.3h2M440 93.4h3M444.5 93.4h2M440 96.3h3M444.5 96.3h2"/></g><rect x="455.6" y="86.6" width="12.3" height="9.6" fill="none" stroke="#AEB3BE" stroke-width="1.3"/><path d="M458.6 89.3h2.4v4.4h-2.4z" stroke="#AEB3BE" stroke-width="1" fill="none"/><path d="M462.6 89.2l2.8 4.6M465.4 89.2l-2.8 4.6" stroke="#AEB3BE" stroke-width="1" fill="none"/><rect x="476.8" y="88.2" width="12.6" height="5.8" fill="none" stroke="#AEB3BE" stroke-width="1.8"/><path d="M479.5 85.3v2.2M483 85.3v2.2M486.5 85.3v2.2M479.5 94.6v2.6M483 94.6v2.6M486.5 94.6v2.6" stroke="#AEB3BE" stroke-width="1.6"/><rect x="498.6" y="83.4" width="13" height="12.4" fill="#DCDFE7" stroke="#CACED7" stroke-width="0.8"/><rect x="498.3" y="83.2" width="13.6" height="2" fill="#C8CCD5"/><path d="M500.5 89.5l1-1.5 1 1.5 1-1.5 1 1.5 1-1.5 1 1.5 1-1.5 1 1.5v5.5l-1 1.8-1-1.8-1 1.8-1-1.8-1 1.8-1-1.8-1 1.8-1-1.8z" fill="#C2C6CF"/><defs><linearGradient id="cw" x1="0" y1="0" x2="0" y2="1"><stop offset="0" stop-color="#FFFFFF"/><stop offset="1" stop-color="#C3CEE2"/></linearGradient></defs><rect x="520.6" y="84.4" width="13" height="12" fill="url(#cw)" stroke="#3C4E74" stroke-width="0.9"/><rect x="520.2" y="84" width="13.8" height="2.3" fill="#3F7BDB"/><path d="M523.3 85v8.9h3.8M523.3 88.6h2" stroke="#4A4A4A" stroke-width="0.9" fill="none"/><circle cx="527.2" cy="88.6" r="2.4" fill="#E39A1A"/><circle cx="529" cy="93.7" r="2.5" fill="#1F9A2E"/><rect x="542" y="93.5" width="6" height="1.5" fill="#1B2540"/><path d="M542 96h6l-3 3.5z" fill="#1B2540"/><rect x="553" y="82" width="1" height="1" fill="#5E6A80"/><rect x="557" y="82" width="1" height="1" fill="#5E6A80"/><rect x="555" y="84" width="1" height="1" fill="#5E6A80"/><rect x="553" y="86" width="1" height="1" fill="#5E6A80"/><rect x="557" y="86" width="1" height="1" fill="#5E6A80"/><rect x="555" y="88" width="1" height="1" fill="#5E6A80"/><rect x="553" y="90" width="1" height="1" fill="#5E6A80"/><rect x="557" y="90" width="1" height="1" fill="#5E6A80"/><rect x="555" y="92" width="1" height="1" fill="#5E6A80"/><rect x="553" y="94" width="1" height="1" fill="#5E6A80"/><rect x="557" y="94" width="1" height="1" fill="#5E6A80"/><rect x="555" y="96" width="1" height="1" fill="#5E6A80"/><rect x="553" y="98" width="1" height="1" fill="#5E6A80"/><rect x="557" y="98" width="1" height="1" fill="#5E6A80"/><g stroke="#333" fill="none"><path d="M571.9 83v5.5" stroke-width="1.8"/><path d="M568.6 85.8l3.3 3.3 3.3-3.3" stroke-width="1.8"/><path d="M565.6 88.8v8.9h13.1v-8.9" stroke-width="1.3"/></g><rect x="565" y="94.3" width="14.3" height="3.6" fill="#333"/><g fill="#333"><rect x="567" y="91.2" width="1.7" height="1.7"/><rect x="571" y="91.2" width="1.7" height="1.7"/><rect x="575.1" y="91.2" width="1.7" height="1.7"/></g><g fill="#fff"><rect x="569.1" y="95" width="1.7" height="1.8"/><rect x="573.1" y="95" width="1.8" height="1.8"/></g><g stroke="#333" fill="none"><path d="M593.8 83v5.5" stroke-width="1.8"/><path d="M590.5 85.8l3.3 3.3 3.3-3.3" stroke-width="1.8"/><path d="M587.6 88.8v8.5h13.2v-8.5" stroke-width="1.3"/></g><g fill="#333"><rect x="589.3" y="91.2" width="1.7" height="1.7"/><rect x="593" y="91.2" width="1.7" height="1.7"/><rect x="597" y="91.2" width="1.7" height="1.7"/><rect x="591.2" y="94" width="1.7" height="1.7"/><rect x="595" y="94" width="1.7" height="1.7"/></g><rect x="608" y="81" width="1" height="20" fill="#9AA3B6"/><g stroke="#C0C4CD" fill="none"><path d="M617.5 90v7h13.5v-13" stroke-width="1.1"/><path d="M617.8 84.3l6 6M623.8 84.3l-6 6" stroke-width="1.2"/></g><g fill="#C0C4CD"><rect x="627.5" y="85.2" width="1.7" height="1.7"/><rect x="625.5" y="88.2" width="1.7" height="1.7"/><rect x="619.3" y="91" width="1.7" height="1.7"/><rect x="623.3" y="91" width="1.7" height="1.7"/><rect x="627.3" y="91" width="1.7" height="1.7"/><rect x="621.3" y="93.8" width="1.7" height="1.7"/><rect x="625.3" y="93.8" width="1.7" height="1.7"/></g><rect x="639" y="93.5" width="6" height="1.5" fill="#1B2540"/><path d="M639 96h6l-3 3.5z" fill="#1B2540"/><rect x="650" y="82" width="1" height="1" fill="#5E6A80"/><rect x="654" y="82" width="1" height="1" fill="#5E6A80"/><rect x="652" y="84" width="1" height="1" fill="#5E6A80"/><rect x="650" y="86" width="1" height="1" fill="#5E6A80"/><rect x="654" y="86" width="1" height="1" fill="#5E6A80"/><rect x="652" y="88" width="1" height="1" fill="#5E6A80"/><rect x="650" y="90" width="1" height="1" fill="#5E6A80"/><rect x="654" y="90" width="1" height="1" fill="#5E6A80"/><rect x="652" y="92" width="1" height="1" fill="#5E6A80"/><rect x="650" y="94" width="1" height="1" fill="#5E6A80"/><rect x="654" y="94" width="1" height="1" fill="#5E6A80"/><rect x="652" y="96" width="1" height="1" fill="#5E6A80"/><rect x="650" y="98" width="1" height="1" fill="#5E6A80"/><rect x="654" y="98" width="1" height="1" fill="#5E6A80"/><defs><linearGradient id="chip" x1="0" y1="0" x2="1" y2="0"><stop offset="0" stop-color="#4A7FE0"/><stop offset="0.35" stop-color="#6A9AF0"/><stop offset="1" stop-color="#1A3A8A"/></linearGradient></defs><rect x="663" y="88" width="14" height="7.5" rx="0.8" fill="url(#chip)"/><g fill="#4F86E6"><rect x="664.2" y="86.6" width="1.8" height="1.6"/><rect x="667.7" y="86.6" width="1.8" height="1.6"/><rect x="671.2" y="86.6" width="1.8" height="1.6"/><rect x="674.5" y="86.6" width="1.8" height="1.6"/></g><g fill="#1A2A66"><rect x="664.2" y="95.3" width="1.8" height="1.8"/><rect x="667.7" y="95.3" width="1.8" height="1.8"/><rect x="671.2" y="95.3" width="1.8" height="1.8"/><rect x="674.5" y="95.3" width="1.8" height="1.8"/></g><path d="M56 121.3h3.5M59.8 118.3v6.5M59.8 119.6h3.6v3.6h-3.6" stroke="#65552F" stroke-width="1.2" fill="none"/><rect x="59.8" y="122.4" width="3.8" height="1.2" fill="#65552F"/><path d="M74.6 117.2l8.8 7.8M83.4 117.2l-8.8 7.8" stroke="#6B5C38" stroke-width="1.5"/><path d="M12 144.20000000000002h10M17.6 139.8l4.4 4.4-4.4 4.4" stroke="#C8841E" stroke-width="1.9" fill="none"/><path d="M219 144.20000000000002h10M224.6 139.8l4.4 4.4-4.4 4.4" stroke="#C8841E" stroke-width="1.9" fill="none"/><path d="M182 143h6l-3 3z" fill="#111"/><rect x="193.5" y="134.5" width="15" height="8.5" fill="none" stroke="#CDD3E3" stroke-width="1"/><rect x="193.5" y="144.5" width="15" height="8.5" fill="none" stroke="#CDD3E3" stroke-width="1"/><path d="M198 140.5h6l-3-3z" fill="#111"/><path d="M198 147h6l-3 3z" fill="#111"/><path d="M177 175.80 L179 174.30 l4 3.1 l4 -3.1 l4 3.1 l4 -3.1 l4 3.1 l4 -3.1 l4 3.1 l4 -3.1 l4 3.1 l4 -3.1 l4 3.1 l4 -3.1 l4 3.1 l4 -3.1 l4 3.1 l4 -3.1 l4 3.1 l4 -3.1 l4 3.1 l4 -3.1 l4 3.1 l4 -3.1 l4 3.1 l4 -3.1 l4 3.1 l4 -3.1 l4 3.1 l4 -3.1 l4 3.1 l4 -3.1 l4 3.1 l4 -3.1 l4 3.1 l4 -3.1 l4 3.1 l4 -3.1 l4 3.1 l4 -3.1 l4 3.1 l4 -3.1 l4 3.1" stroke="#FF0000" stroke-width="1.3" fill="none" stroke-linejoin="round"/><path d="M177 308.46 L179 306.96 l4 3.1 l4 -3.1 l4 3.1 l4 -3.1 l4 3.1 l4 -3.1 l4 3.1 l4 -3.1 l4 3.1 l4 -3.1 l4 3.1 l4 -3.1 l4 3.1 l4 -3.1 l4 3.1 l4 -3.1 l4 3.1 l4 -3.1 l4 3.1 l4 -3.1 l4 3.1 l4 -3.1 l4 3.1 l4 -3.1 l4 3.1 l4 -3.1 l4 3.1 l4 -3.1 l4 3.1 l4 -3.1 l4 3.1 l4 -3.1 l4 3.1 l4 -3.1 l4 3.1 l4 -3.1 l4 3.1 l4 -3.1 l4 3.1 l4 -3.1 l4 3.1" stroke="#FF0000" stroke-width="1.3" fill="none" stroke-linejoin="round"/><path d="M177 441.12 L179 439.62 l4 3.1 l4 -3.1 l4 3.1 l4 -3.1 l4 3.1 l4 -3.1 l4 3.1 l4 -3.1 l4 3.1 l4 -3.1 l4 3.1 l4 -3.1 l4 3.1 l4 -3.1 l4 3.1 l4 -3.1 l4 3.1 l4 -3.1 l4 3.1 l4 -3.1 l4 3.1 l4 -3.1 l4 3.1 l4 -3.1 l4 3.1 l4 -3.1 l4 3.1 l4 -3.1 l4 3.1 l4 -3.1 l4 3.1 l4 -3.1 l4 3.1 l4 -3.1 l4 3.1 l4 -3.1 l4 3.1 l4 -3.1 l4 3.1 l4 -3.1 l4 3.1" stroke="#FF0000" stroke-width="1.3" fill="none" stroke-linejoin="round"/><path d="M177 573.78 L179 572.28 l4 3.1 l4 -3.1 l4 3.1 l4 -3.1 l4 3.1 l4 -3.1 l4 3.1 l4 -3.1 l4 3.1 l4 -3.1 l4 3.1 l4 -3.1 l4 3.1 l4 -3.1 l4 3.1 l4 -3.1 l4 3.1 l4 -3.1 l4 3.1 l4 -3.1 l4 3.1 l4 -3.1 l4 3.1 l4 -3.1 l4 3.1 l4 -3.1 l4 3.1 l4 -3.1 l4 3.1 l4 -3.1 l4 3.1 l4 -3.1 l4 3.1 l4 -3.1 l4 3.1 l4 -3.1 l4 3.1 l4 -3.1 l4 3.1 l4 -3.1 l4 3.1" stroke="#FF0000" stroke-width="1.3" fill="none" stroke-linejoin="round"/><path d="M58 589h6l-3 3z" fill="#1E1E1E"/><path d="M78 585v9l-5-4.5z" fill="#868999"/>
</svg>
</body></html>
